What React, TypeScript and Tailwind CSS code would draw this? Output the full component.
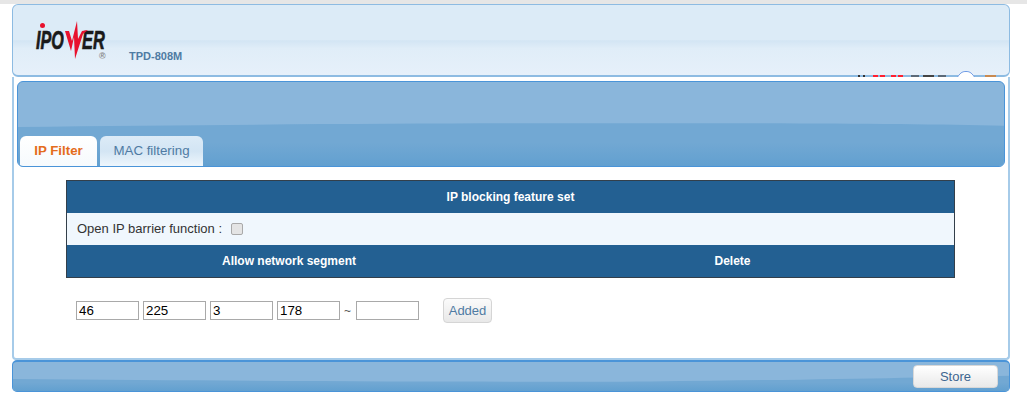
const FONT = "font-['Liberation_Sans',Arial,sans-serif]";

function Wave({ d, id }: { d: string; id: string }) {
  return (
    <svg
      className="absolute inset-0 h-full w-full"
      viewBox="0 0 1000 100"
      preserveAspectRatio="none"
    >
      <defs>
        <linearGradient id={id} x1="0" y1="0" x2="0" y2="1">
          <stop offset="0.45" stopColor="#72a8d3" />
          <stop offset="1" stopColor="#62a0d0" />
        </linearGradient>
      </defs>
      <path d={d} fill={`url(#${id})`} />
    </svg>
  );
}

function Logo() {
  return (
    <div className="relative h-[40px] w-[72px]">
      <span className="absolute left-[2px] top-[9px] origin-left font-['Liberation_Sans',sans-serif] text-[26px] font-bold italic leading-[20px] text-[#1a1a1a] [transform:scaleX(0.62)] [-webkit-text-stroke:0.7px_#1a1a1a]">
        IPO
      </span>
      <span className="absolute left-[48px] top-[9px] origin-left font-['Liberation_Sans',sans-serif] text-[26px] font-bold italic leading-[20px] text-[#1a1a1a] [transform:scaleX(0.63)] [-webkit-text-stroke:0.7px_#1a1a1a]">
        ER
      </span>
      <span className="absolute left-[6px] top-[2px] h-[5px] w-[5px] rounded-full bg-[#e8112d]" />
      <svg className="absolute left-[30px] top-0" width="25" height="39" viewBox="0 0 25 39">
        <path d="M1 10 L5 10 L8 20 L13 0 L14 18 L18 10 L24 9 L19 13 L11 38 L10 16 L7 30 Z" fill="#e8112d" />
      </svg>
      <span className="absolute left-[65px] top-[31px] font-['Liberation_Sans',sans-serif] text-[9px] font-bold leading-none text-[#888]">
        ®
      </span>
    </div>
  );
}

function IpInput({ value }: { value: string }) {
  return (
    <input
      readOnly
      value={value}
      className="h-[19px] w-[63px] border border-[#a9a9a9] bg-white px-[2px] text-[13.3px] leading-none text-black outline-none"
    />
  );
}

export default function App() {
  return (
    <div className={`${FONT} h-[402px] w-[1027px] overflow-hidden bg-white`}>
      <div className="h-[4px] bg-[#e6e6e6]" />
      <div className="mx-[12px] w-[998px]">
        <header className="relative h-[73px] rounded-[6px] border border-b-2 border-[#8dbbe2] bg-[linear-gradient(#dcebf7_0%,#dcebf7_50%,#d3e5f4_51%,#e0edf8_62%,#e6f0fa_100%)]">
          <div className="relative flex h-full items-start pl-[21px] pt-[16px]">
            <Logo />
            <span className="ml-[23px] mt-[29px] text-[11px] font-bold leading-[13px] text-[#4f7ba3]">
              TPD-808M
            </span>
          </div>
          <div className="absolute bottom-[-2px] left-[845px] flex h-[6px] items-end">
            <span className="h-[2px] w-[2px] bg-[#333]" />
            <span className="ml-[3px] h-[2px] w-[2px] bg-[#333]" />
            <span className="ml-[8px] h-[2px] w-[5px] bg-[#ff2030]" />
            <span className="ml-[2px] h-[2px] w-[5px] bg-[#ff2030]" />
            <span className="ml-[6px] h-[2px] w-[5px] bg-[#ff2030]" />
            <span className="ml-[2px] h-[2px] w-[5px] bg-[#ff2030]" />
            <span className="ml-[8px] h-[2px] w-[8px] bg-[#5c6a78]" />
            <span className="ml-[4px] h-[2px] w-[11px] bg-[#444]" />
            <span className="ml-[4px] h-[2px] w-[8px] bg-[#5c6a78]" />
            <svg className="ml-[11px]" width="18" height="6" viewBox="0 0 18 6">
              <path d="M0.5 6 C4 1 6 0.5 9 0.5 C12 0.5 14 1 17.5 6" fill="#fff" stroke="#6f9be6" />
            </svg>
            <span className="ml-[10px] h-[2px] w-[11px] bg-[#c98a50]" />
          </div>
        </header>
        <main className="h-[283px] rounded-b-[4px] border-x-2 border-b-2 border-[#a6cbe9] bg-white px-[3px] pt-[4px]">
          <div className="relative h-[86px] overflow-hidden rounded-[6px] border border-[#4a94d8] bg-[#8ab6db]">
            <Wave id="panel-wave" d="M0 53.5 C 250 50 480 49 640 49 C 800 49 920 50 1000 52 L1000 100 L0 100 Z" />
            <div className="absolute bottom-0 left-[2px] flex items-end gap-[3px]">
              <div className="flex h-[30px] w-[77px] items-center justify-center rounded-t-[6px] bg-[linear-gradient(#ffffff,#f6fafd)] text-[13.3px] font-bold text-[#e46c1c]">
                IP Filter
              </div>
              <div className="flex h-[30px] w-[103px] items-center justify-center rounded-t-[6px] bg-[linear-gradient(#dcebf7_0%,#d3e5f4_50%,#eef6fc_100%)] text-[13.3px] text-[#4f7ba3]">
                MAC filtering
              </div>
            </div>
          </div>
          <section className="ml-[49px] mt-[13px] w-[889px] border border-[#333f4a]">
            <div className="flex h-[32px] items-center justify-center bg-[#236092] text-[12px] font-bold text-white">
              IP blocking feature set
            </div>
            <div className="flex h-[32px] items-center bg-[#f0f7fd] pl-[10px] text-[13px] text-[#333]">
              <span>Open IP barrier function :</span>
              <span className="ml-[9px] h-[12px] w-[12px] rounded-[2px] border border-[#a9a9a9] bg-[#e4e4e4]" />
            </div>
            <div className="flex h-[32px] items-center bg-[#236092] text-[12px] font-bold text-white">
              <span className="w-[444px] text-center">Allow network segment</span>
              <span className="flex-1 text-center">Delete</span>
            </div>
          </section>
          <div className="ml-[59px] mt-[20px] flex items-center">
            <div className="flex items-center gap-[4px]">
              <IpInput value="46" />
              <IpInput value="225" />
              <IpInput value="3" />
              <IpInput value="178" />
            </div>
            <span className="ml-[4px] mr-[5px] text-[12px] text-[#555]">~</span>
            <IpInput value="" />
            <button className="ml-[24px] h-[25px] w-[49px] rounded-[4px] border border-[#d5d5d5] bg-[linear-gradient(#fbfbfb,#e8e8e8)] text-[13px] text-[#4f7ba3]">
              Added
            </button>
          </div>
        </main>
        <footer className="relative h-[32px] overflow-hidden rounded-[5px] border border-t-2 border-[#4a94d8] bg-[#8ab6db]">
          <Wave id="footer-wave" d="M0 59 C 250 66 480 70 640 67 C 800 62 920 52 1000 47 L1000 100 L0 100 Z" />
          <div className="relative flex h-full items-center justify-end pr-[11px]">
            <button className="h-[23px] w-[85px] rounded-[4px] border border-[#d8d8d8] bg-[linear-gradient(#ffffff,#e9e9e9)] text-[13px] text-[#3d6690]">
              Store
            </button>
          </div>
        </footer>
      </div>
    </div>
  );
}
